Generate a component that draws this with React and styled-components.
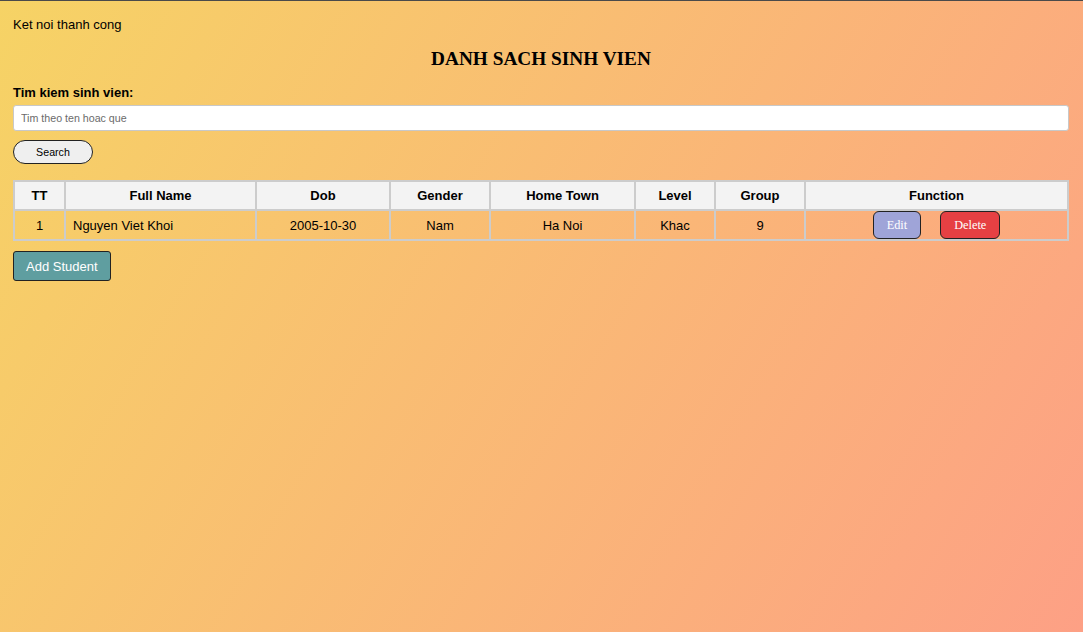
import React, { useState } from "react";
import styled, { createGlobalStyle } from "styled-components";

const GlobalStyle = createGlobalStyle`
  html, body {
    margin: 0;
    padding: 0;
  }
  body {
    font-family: "Liberation Sans", Arial, sans-serif;
    color: #000;
  }
`;

const columns = [
  { label: "TT", width: 51 },
  { label: "Full Name", width: 191 },
  { label: "Dob", width: 134 },
  { label: "Gender", width: 100 },
  { label: "Home Town", width: 145 },
  { label: "Level", width: 80 },
  { label: "Group", width: 90 },
  { label: "Function" },
];

const students = [
  {
    id: 1,
    name: "Nguyen Viet Khoi",
    dob: "2005-10-30",
    gender: "Nam",
    town: "Ha Noi",
    level: "Khac",
    group: 9,
  },
];

const App = () => {
  const [query, setQuery] = useState("");

  return (
    <Page>
      <GlobalStyle />
      <Status>Ket noi thanh cong</Status>
      <Title>DANH SACH SINH VIEN</Title>
      <SearchLabel htmlFor="search">Tim kiem sinh vien:</SearchLabel>
      <SearchInput
        id="search"
        placeholder="Tim theo ten hoac que"
        value={query}
        onChange={(e) => setQuery(e.target.value)}
      />
      <SearchButton>Search</SearchButton>
      <Table>
        <colgroup>
          {columns.map((c) => (
            <col key={c.label} style={c.width ? { width: c.width } : undefined} />
          ))}
        </colgroup>
        <thead>
          <tr>
            {columns.map((c) => (
              <Th key={c.label}>{c.label}</Th>
            ))}
          </tr>
        </thead>
        <tbody>
          {students.map((s) => (
            <tr key={s.id}>
              <Td>{s.id}</Td>
              <Td $left>{s.name}</Td>
              <Td>{s.dob}</Td>
              <Td>{s.gender}</Td>
              <Td>{s.town}</Td>
              <Td>{s.level}</Td>
              <Td>{s.group}</Td>
              <Td>
                <Actions>
                  <ActionButton $bg="#9fa4d8">Edit</ActionButton>
                  <ActionButton $bg="#e64043">Delete</ActionButton>
                </Actions>
              </Td>
            </tr>
          ))}
        </tbody>
      </Table>
      <AddButton>Add Student</AddButton>
    </Page>
  );
};

export default App;

const Page = styled.div`
  min-height: 100vh;
  box-sizing: border-box;
  border-top: 1px solid #4a4a4a;
  padding: 16px 14px 20px 13px;
  background: linear-gradient(120deg, #f6d365 0%, #fda085 100%);
`;

const Status = styled.div`
  font-size: 13px;
  line-height: 15px;
`;

const Title = styled.h3`
  margin: 16px 0 15px;
  text-align: center;
  font-family: "Liberation Serif", "Times New Roman", serif;
  font-size: 19.3px;
  line-height: 22px;
  font-weight: bold;
`;

const SearchLabel = styled.label`
  display: block;
  font-size: 13px;
  line-height: 16px;
  font-weight: bold;
`;

const SearchInput = styled.input`
  display: block;
  box-sizing: border-box;
  width: 100%;
  height: 26px;
  margin-top: 4px;
  padding: 0 7px;
  border: 1px solid #c8c8c8;
  border-radius: 3px;
  background: #fff;
  font-family: "Liberation Sans", Arial, sans-serif;
  font-size: 10.67px;
  outline: none;
  &::placeholder {
    color: #6b6b6b;
  }
`;

const SearchButton = styled.button`
  display: block;
  box-sizing: border-box;
  width: 80px;
  height: 24px;
  margin-top: 9px;
  border: 1px solid #222;
  border-radius: 12px;
  background: #efefef;
  font-family: "Liberation Sans", Arial, sans-serif;
  font-size: 10.67px;
  color: #000;
  cursor: pointer;
`;

const Table = styled.table`
  width: 100%;
  margin-top: 16px;
  table-layout: fixed;
  border-collapse: collapse;
  border: 2px solid #cccccc;
  font-size: 13px;
`;

const Th = styled.th`
  box-sizing: border-box;
  height: 29px;
  padding: 0 6px;
  border: 2px solid #cccccc;
  background: #f3f3f3;
  font-weight: bold;
  text-align: center;
`;

const Td = styled.td`
  box-sizing: border-box;
  height: 30px;
  padding: 0 7px;
  border: 2px solid #cccccc;
  text-align: ${(p) => (p.$left ? "left" : "center")};
`;

const Actions = styled.div`
  display: flex;
  justify-content: center;
  gap: 19px;
`;

const ActionButton = styled.button`
  box-sizing: border-box;
  height: 28px;
  padding: 0 13px;
  border: 1px solid #222;
  border-radius: 6px;
  background: ${(p) => p.$bg};
  color: #fff;
  font-family: "Liberation Serif", "Times New Roman", serif;
  font-size: 12.3px;
  cursor: pointer;
`;

const AddButton = styled.button`
  display: block;
  box-sizing: border-box;
  height: 30px;
  margin-top: 10px;
  padding: 0 12px;
  border: 1px solid #222;
  border-radius: 3px;
  background: #5f9ea0;
  color: #fff;
  font-family: "Liberation Sans", Arial, sans-serif;
  font-size: 13px;
  cursor: pointer;
`;
